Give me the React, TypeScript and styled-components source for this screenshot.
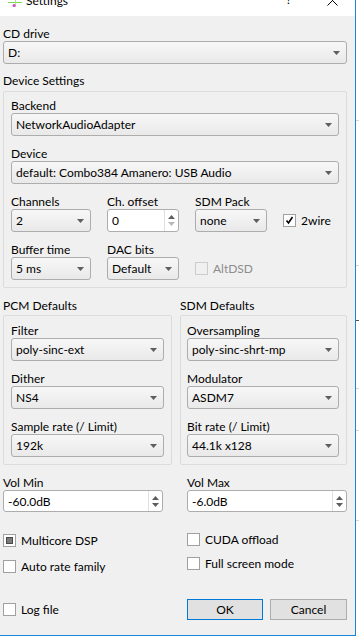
import React from 'react';
import styled, { createGlobalStyle } from 'styled-components';

const GlobalStyle = createGlobalStyle`
  html, body {
    margin: 0;
    padding: 0;
    background: #ffffff;
  }
  body {
    font-family: Lato, "Liberation Sans", sans-serif;
    font-size: 12px;
    color: #000000;
  }
`;

const Screen = styled.div`
  width: 359px;
  height: 637px;
  display: flex;
  flex-direction: row;
  background: #ffffff;
  overflow: hidden;
`;

const Window = styled.div`
  width: 355px;
  height: 635px;
  flex-shrink: 0;
  background: #f0f0f0;
  border-right: 1px solid #1a84d8;
  border-bottom: 1px solid #1a84d8;
  display: flex;
  flex-direction: column;
  overflow: hidden;
`;

const BehindStrip = styled.div`
  flex: 1;
  height: 637px;
  background:
    linear-gradient(#d6d6d6, #d6d6d6) 0 120px / 100% 1px no-repeat,
    linear-gradient(#d6d6d6, #d6d6d6) 0 265px / 100% 1px no-repeat,
    linear-gradient(#555555, #555555) 0 320px / 100% 1px no-repeat,
    linear-gradient(#d6d6d6, #d6d6d6) 0 388px / 100% 1px no-repeat,
    linear-gradient(#d6d6d6, #d6d6d6) 0 430px / 100% 1px no-repeat,
    linear-gradient(#d6d6d6, #d6d6d6) 0 520px / 100% 1px no-repeat,
    #ffffff;
`;

const TitleBar = styled.div`
  height: 16px;
  flex-shrink: 0;
  background: #ffffff;
  display: flex;
  align-items: flex-start;
  overflow: hidden;
  padding-left: 8px;
`;

const TitleIcon = styled.svg`
  width: 14px;
  height: 8px;
  flex-shrink: 0;
`;

const TitleText = styled.div`
  margin-left: 4px;
  margin-top: -7px;
  line-height: 16px;
  font-size: 12px;
  flex: 1;
`;

const TitleHelp = styled.div`
  margin-top: -8px;
  line-height: 16px;
  width: 41px;
`;

const TitleClose = styled.svg`
  width: 11px;
  height: 11px;
  margin-top: -5px;
  margin-right: 17px;
  flex-shrink: 0;
`;

const Content = styled.div`
  display: flex;
  flex-direction: column;
  padding: 11px 8px 0 3px;
`;

const Label = styled.div<{ $top?: number }>`
  height: 14px;
  line-height: 14px;
  white-space: nowrap;
  margin-top: ${(p) => p.$top ?? 0}px;
`;

const Field = styled.div`
  display: flex;
  flex-direction: column;
  min-width: 0;
`;

const Stack = styled.div`
  display: flex;
  flex-direction: column;
  gap: 11px;
`;

const GroupBox = styled.div<{ $top?: number; $pad: string }>`
  border: 1px solid #dcdcdc;
  border-radius: 2px;
  padding: ${(p) => p.$pad};
  margin-top: ${(p) => p.$top ?? 0}px;
`;

const ComboBox = styled.div`
  height: 23px;
  box-sizing: border-box;
  border: 1px solid #adadad;
  border-radius: 3px;
  background: linear-gradient(#f7f7f7, #e9e9e9);
  display: flex;
  align-items: center;
  justify-content: space-between;
  padding: 0 6px 0 4px;
  white-space: nowrap;
`;

const ArrowSvg = styled.svg`
  width: 7px;
  height: 4px;
  flex-shrink: 0;
`;

const SpinBoxFrame = styled.div<{ $h: number }>`
  height: ${(p) => p.$h}px;
  box-sizing: border-box;
  border: 1px solid #adadad;
  border-radius: 3px;
  background: #ffffff;
  display: flex;
  align-items: stretch;
`;

const SpinText = styled.div`
  flex: 1;
  display: flex;
  align-items: center;
  padding-left: 4px;
  white-space: nowrap;
`;

const SpinButtons = styled.div`
  width: 13px;
  border-left: 1px solid #e0e0e0;
  display: flex;
  flex-direction: column;
  align-items: center;
  justify-content: center;
  gap: 3px;
`;

const DeviceGrid = styled.div`
  display: grid;
  grid-template-columns: 80px 72px 72px 1fr;
  column-gap: 16px;
  row-gap: 11px;
`;

const CheckCell = styled.div`
  align-self: end;
  height: 23px;
  display: flex;
  align-items: center;
`;

const CheckRow = styled.div<{ $disabled?: boolean }>`
  height: 14px;
  display: flex;
  align-items: center;
  gap: 5px;
  white-space: nowrap;
  color: ${(p) => (p.$disabled ? '#8d8d8d' : '#000000')};
`;

const Box = styled.div<{ $disabled?: boolean }>`
  width: 13px;
  height: 13px;
  box-sizing: border-box;
  border: 1px solid ${(p) => (p.$disabled ? '#cccccc' : '#a0a0a0')};
  background: ${(p) => (p.$disabled ? '#f0f0f0' : '#ffffff')};
  display: flex;
  align-items: center;
  justify-content: center;
  flex-shrink: 0;
`;

const PartialMark = styled.div`
  width: 7px;
  height: 7px;
  box-sizing: border-box;
  background: #7a7a7a;
  border: 1px solid #4a4a4a;
`;

const DefaultsGrid = styled.div`
  display: grid;
  grid-template-columns: 169px 167px;
  column-gap: 8px;
  margin-top: 11px;
`;

const BottomGrid = styled.div`
  display: grid;
  grid-template-columns: 160px 160px;
  column-gap: 24px;
  margin-top: 11px;
`;

const CheckColumn = styled.div<{ $top: number; $gap: number }>`
  display: flex;
  flex-direction: column;
  gap: ${(p) => p.$gap}px;
  margin-top: ${(p) => p.$top}px;
`;

const Footer = styled.div`
  margin-top: 26px;
  height: 21px;
  display: flex;
  align-items: center;
`;

const ButtonRow = styled.div`
  margin-top: 26px;
  display: flex;
  gap: 7px;
`;

const Button = styled.div<{ $default?: boolean; $w: number }>`
  width: ${(p) => p.$w}px;
  height: 21px;
  box-sizing: border-box;
  border: 1px solid ${(p) => (p.$default ? '#0078d7' : '#adadad')};
  background: #e1e1e1;
  display: flex;
  align-items: center;
  justify-content: center;
`;

const Arrow = ({ up = false, color = '#5e5e5e' }: { up?: boolean; color?: string }) => (
  <ArrowSvg viewBox="0 0 7 4">
    <path d={up ? 'M0 4 L3.5 0 L7 4 Z' : 'M0 0 L7 0 L3.5 4 Z'} fill={color} />
  </ArrowSvg>
);

const Combo = ({ value }: { value: string }) => (
  <ComboBox>
    <span>{value}</span>
    <Arrow />
  </ComboBox>
);

const Spin = ({ value, h, downDisabled = false }: { value: string; h: number; downDisabled?: boolean }) => (
  <SpinBoxFrame $h={h}>
    <SpinText>{value}</SpinText>
    <SpinButtons>
      <Arrow up />
      <Arrow color={downDisabled ? '#b8b8b8' : '#5e5e5e'} />
    </SpinButtons>
  </SpinBoxFrame>
);

const ComboField = ({ label, value }: { label: string; value: string }) => (
  <Field>
    <Label>{label}</Label>
    <Combo value={value} />
  </Field>
);

type CheckState = 'off' | 'on' | 'partial';

const Check = ({ text, state = 'off', disabled = false }: { text: string; state?: CheckState; disabled?: boolean }) => (
  <CheckRow $disabled={disabled}>
    <Box $disabled={disabled}>
      {state === 'on' && (
        <svg width="9" height="9" viewBox="0 0 9 9">
          <path d="M1.5 4.5 L3.5 7 L7.5 1" stroke="#000" strokeWidth="1.6" fill="none" />
        </svg>
      )}
      {state === 'partial' && <PartialMark />}
    </Box>
    <span>{text}</span>
  </CheckRow>
);

const App: React.FC = () => {
  return (
    <>
      <GlobalStyle />
      <Screen>
        <Window>
          <TitleBar>
            <TitleIcon viewBox="0 0 14 8">
              <rect x="0" y="2" width="14" height="1" fill="#7ed957" />
              <rect x="7" y="0" width="1" height="7" fill="#a6e08a" />
              <circle cx="6" cy="5.5" r="1.5" fill="#e040e0" />
            </TitleIcon>
            <TitleText>Settings</TitleText>
            <TitleHelp>?</TitleHelp>
            <TitleClose viewBox="0 0 11 11">
              <path d="M0.5 0.5 L10.5 10.5 M10.5 0.5 L0.5 10.5" stroke="#000" strokeWidth="1" />
            </TitleClose>
          </TitleBar>
          <Content>
            <ComboField label="CD drive" value="D:" />

            <Label $top={10}>Device Settings</Label>
            <GroupBox $top={3} $pad="7px 7px 7px 7px">
              <Stack>
                <ComboField label="Backend" value="NetworkAudioAdapter" />
                <ComboField label="Device" value="default: Combo384 Amanero: USB Audio" />
                <DeviceGrid>
                  <ComboField label="Channels" value="2" />
                  <Field>
                    <Label>Ch. offset</Label>
                    <Spin value="0" h={23} downDisabled />
                  </Field>
                  <ComboField label="SDM Pack" value="none" />
                  <CheckCell>
                    <Check text="2wire" state="on" />
                  </CheckCell>
                  <ComboField label="Buffer time" value="5 ms" />
                  <ComboField label="DAC bits" value="Default" />
                  <CheckCell>
                    <Check text="AltDSD" disabled />
                  </CheckCell>
                </DeviceGrid>
              </Stack>
            </GroupBox>

            <DefaultsGrid>
              <Label>PCM Defaults</Label>
              <Label>SDM Defaults</Label>
              <GroupBox $top={2} $pad="8px 7px 7px 7px">
                <Stack>
                  <ComboField label="Filter" value="poly-sinc-ext" />
                  <ComboField label="Dither" value="NS4" />
                  <ComboField label="Sample rate (/ Limit)" value="192k" />
                </Stack>
              </GroupBox>
              <GroupBox $top={2} $pad="8px 7px 7px 6px">
                <Stack>
                  <ComboField label="Oversampling" value="poly-sinc-shrt-mp" />
                  <ComboField label="Modulator" value="ASDM7" />
                  <ComboField label="Bit rate (/ Limit)" value="44.1k x128" />
                </Stack>
              </GroupBox>
            </DefaultsGrid>

            <BottomGrid>
              <Field>
                <Label>Vol Min</Label>
                <Spin value="-60.0dB" h={22} />
              </Field>
              <Field>
                <Label>Vol Max</Label>
                <Spin value="-6.0dB" h={22} />
              </Field>
              <CheckColumn $top={21} $gap={12}>
                <Check text="Multicore DSP" state="partial" />
                <Check text="Auto rate family" />
              </CheckColumn>
              <CheckColumn $top={20} $gap={10}>
                <Check text="CUDA offload" />
                <Check text="Full screen mode" />
              </CheckColumn>
              <Footer>
                <Check text="Log file" />
              </Footer>
              <ButtonRow>
                <Button $default $w={76}>OK</Button>
                <Button $w={77}>Cancel</Button>
              </ButtonRow>
            </BottomGrid>
          </Content>
        </Window>
        <BehindStrip />
      </Screen>
    </>
  );
};

export default App;
